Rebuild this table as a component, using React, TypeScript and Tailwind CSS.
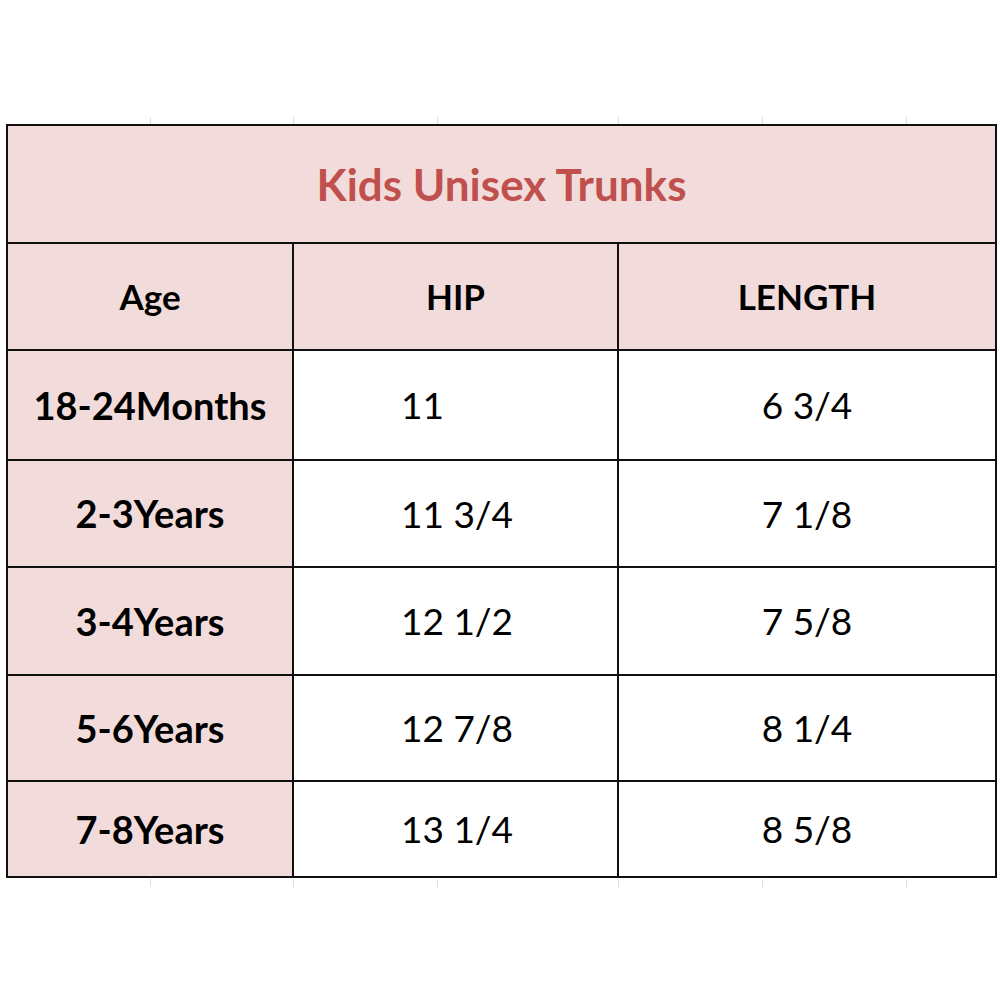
const rows = [
  { age: '18-24Months', hip: '11', length: '6 3/4', h: 'h-[110px]' },
  { age: '2-3Years', hip: '11 3/4', length: '7 1/8', h: 'h-[107px]' },
  { age: '3-4Years', hip: '12 1/2', length: '7 5/8', h: 'h-[108px]' },
  { age: '5-6Years', hip: '12 7/8', length: '8 1/4', h: 'h-[106px]' },
  { age: '7-8Years', hip: '13 1/4', length: '8 5/8', h: 'h-[94px]' },
];

// faint spreadsheet gridline stubs peeking out around the table
const ticksX = [150, 293, 437, 618, 762, 906];

export default function App() {
  return (
    <div
      className="relative w-[1000px] h-[1000px] bg-white text-black"
      style={{ fontFamily: 'Lato, "Open Sans", sans-serif' }}
    >
      {ticksX.map((x) => (
        <div key={'t' + x} className="absolute top-[117px] h-[7px] w-px bg-[#dedede]" style={{ left: x }} />
      ))}
      {ticksX.map((x) => (
        <div key={'b' + x} className="absolute top-[879px] h-[8px] w-px bg-[#dedede]" style={{ left: x }} />
      ))}

      <div className="pt-[124px] pl-[6px]">
        <div className="w-[991px] border-2 border-[#111]">
          {/* Title */}
          <div className="h-[118px] bg-[#f2dcdb] flex items-center justify-center border-b-2 border-[#111]">
            <span className="text-[44px] font-bold text-[#c0504d]">Kids Unisex Trunks</span>
          </div>

          {/* Header */}
          <div className="flex h-[107px] bg-[#f2dcdb] border-b-2 border-[#111] text-[35px] font-bold">
            <div className="w-[286px] flex items-center justify-center border-r-2 border-[#111]">Age</div>
            <div className="w-[325px] flex items-center justify-center border-r-2 border-[#111]">HIP</div>
            <div className="flex-1 flex items-center justify-center">LENGTH</div>
          </div>

          {rows.map((r, i) => (
            <div
              key={r.age}
              className={`flex ${r.h} text-[37px] ${i < rows.length - 1 ? 'border-b-2 border-[#111]' : ''}`}
            >
              <div className="w-[286px] bg-[#f2dcdb] flex items-center justify-center font-bold text-[38px] border-r-2 border-[#111]">
                {r.age}
              </div>
              <div className="w-[325px] flex items-center pl-[107px] border-r-2 border-[#111]">{r.hip}</div>
              <div className="flex-1 flex items-center justify-center">{r.length}</div>
            </div>
          ))}
        </div>
      </div>
    </div>
  );
}
